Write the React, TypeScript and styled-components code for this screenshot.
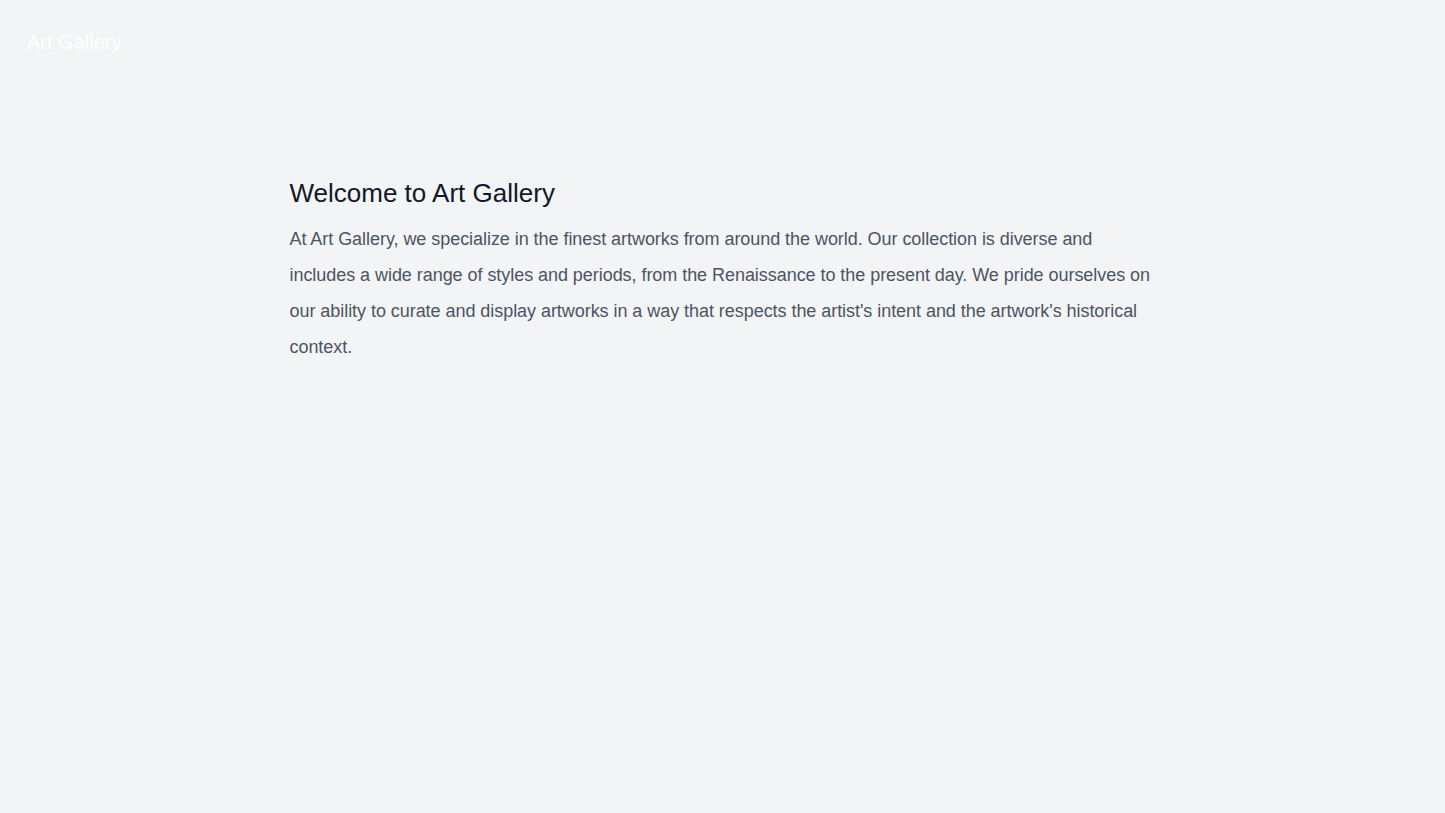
import React from 'react'
import styled, { createGlobalStyle } from 'styled-components'

const GlobalStyle = createGlobalStyle`
  html, body {
    margin: 0;
    padding: 0;
    background-color: #f3f4f6;
    font-family: "Liberation Sans", Arial, sans-serif;
  }
`

const Page = styled.div`
  min-height: 813px;
  background-color: #f3f4f6;
`

const Header = styled.header`
  display: flex;
  align-items: center;
  padding: 28px 27px;
`

const Brand = styled.h1`
  margin: 0;
  font-size: 20px;
  font-weight: 400;
  line-height: 28px;
  color: #ffffff;
`

const Main = styled.main`
  max-width: 866px;
  margin: 0 auto;
  padding: 91px 0 0;
`

const Title = styled.h2`
  margin: 0 0 10px;
  font-size: 26px;
  font-weight: 400;
  line-height: 36px;
  color: #111827;
`

const Body = styled.p`
  margin: 0;
  font-size: 18px;
  line-height: 36px;
  letter-spacing: -0.05px;
  color: #4b5563;
`

const App = () => {
  return (
    <Page>
      <GlobalStyle />
      <Header>
        <Brand>Art Gallery</Brand>
      </Header>
      <Main>
        <Title>Welcome to Art Gallery</Title>
        <Body>
          At Art Gallery, we specialize in the finest artworks from around the world. Our
          collection is diverse and includes a wide range of styles and periods, from the
          Renaissance to the present day. We pride ourselves on our ability to curate and
          display artworks in a way that respects the artist's intent and the artwork's
          historical context.
        </Body>
      </Main>
    </Page>
  )
}

export default App
